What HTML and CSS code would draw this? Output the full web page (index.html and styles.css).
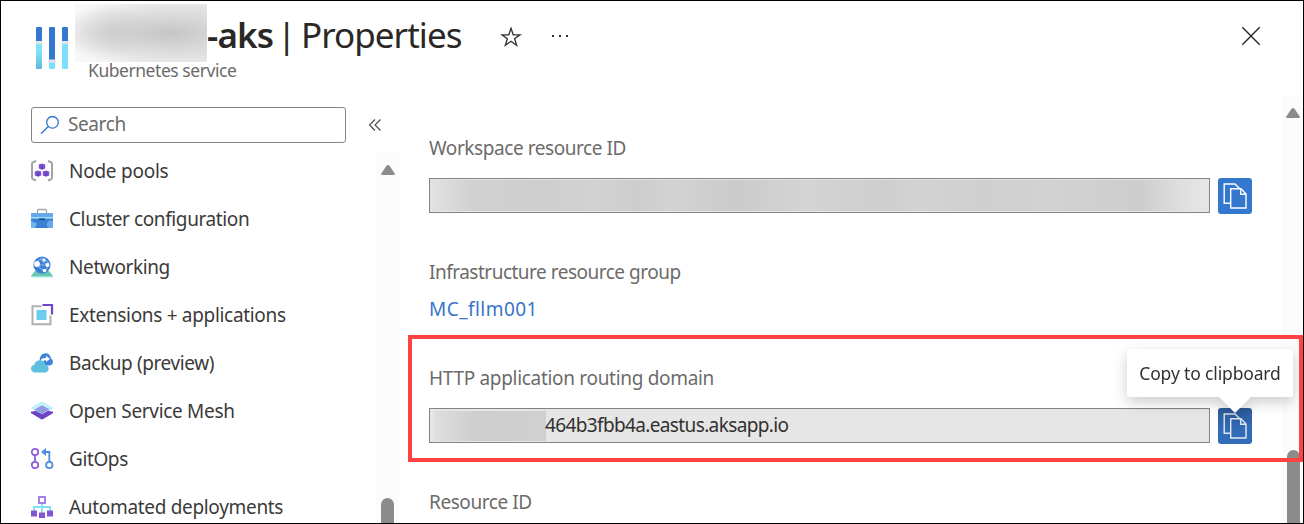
FILE: index.html
```html
<!DOCTYPE html>
<html lang="en">
<head>
<meta charset="utf-8">
<title>Properties</title>
<link rel="stylesheet" href="styles.css">
</head>
<body>
<div class="blade">
  <header class="header">
    <svg class="service-icon" width="34" height="44" viewBox="0 0 34 44">
      <defs><linearGradient id="aqua" x1="0" y1="0" x2="0" y2="1"><stop offset="0.3" stop-color="#7fe3fb"/><stop offset="1" stop-color="#64b8db"/></linearGradient></defs>
      <g fill="#3477cf"><rect x="1" y="1" width="6" height="16" rx="1"/><rect x="14" y="1" width="6" height="34" rx="1"/><rect x="27" y="1" width="6" height="16" rx="1"/></g>
      <rect x="1" y="17" width="6" height="26" rx="1" fill="url(#aqua)"/><rect x="14" y="36" width="6" height="7" rx="1" fill="#7be1fb"/><rect x="27" y="17" width="6" height="26" rx="1" fill="#7be1fb"/>
      <g fill="#e2e4e7"><rect x="0" y="15" width="8" height="3" rx="1"/><rect x="13" y="33.500" width="8" height="3" rx="1"/><rect x="26" y="15" width="8" height="3" rx="1"/></g>
    </svg>
    <div class="titles">
      <div class="title-row">
        <span class="redact redact-title"></span>
        <h1 class="title"><b class="name">-aks</b><span class="bar">|</span><span class="page">Properties</span></h1>
        <svg class="star" width="22" height="22" viewBox="0 0 22 22"><path d="M11 2.200 L13.200 8.800 H20 L14.600 12.700 L16.700 19.400 L11 15.300 L5.300 19.400 L7.400 12.700 L2 8.800 H8.800 Z" fill="none" stroke="#323130" stroke-width="1.300"/></svg>
        <svg class="more" width="18" height="4" viewBox="0 0 18 4"><g fill="#323130"><rect x="1" y="1" width="2" height="2"/><rect x="8" y="1" width="2" height="2"/><rect x="15" y="1" width="2" height="2"/></g></svg>
      </div>
      <div class="subtitle">Kubernetes service</div>
    </div>
    <svg class="close" width="20" height="20" viewBox="0 0 20 20"><path d="M1.300 1.300 L18.700 18.700 M18.700 1.300 L1.300 18.700" stroke="#292827" stroke-width="1.400"/></svg>
  </header>
  <div class="body">
    <nav class="sidebar">
      <div class="search-row">
        <div class="search">
          <svg width="20" height="20" viewBox="0 0 20 20"><circle cx="12.500" cy="7.300" r="5.800" fill="none" stroke="#3477cf" stroke-width="1.300"/><path d="M8.300 11.400 L1 18.700" stroke="#3477cf" stroke-width="1.400"/></svg>
          <span class="placeholder">Search</span>
        </div>
        <svg class="collapse" width="14" height="14" viewBox="0 0 14 14"><path d="M7 1.500 L1.500 7 L7 12.500 M12.500 1.500 L7 7 L12.500 12.500" fill="none" stroke="#484644" stroke-width="1.100"/></svg>
      </div>
      <div class="menu-area">
        <ul class="menu">
          <li class="item"><svg width="24" height="24" viewBox="0 0 24 24"><g fill="none" stroke="#a3a3a3" stroke-width="2"><path d="M6 2 L3.500 3 Q2 3.500 2 5 V18.500 Q2 20 3.500 20.500 L6 21.500"/><path d="M18 2 L20.500 3 Q22 3.500 22 5 V18.500 Q22 20 20.500 20.500 L18 21.500"/></g><g fill="#7a50d2"><path d="M12 4.500 L15.200 5.500 V9.500 L12 10.700 L8.800 9.500 V5.500Z"/><path d="M8 11.500 L11.200 12.500 V16.500 L8 17.700 L4.800 16.500 V12.500Z"/><path d="M16 11.500 L19.200 12.500 V16.500 L16 17.700 L12.800 16.500 V12.500Z"/></g><g stroke="#5d2db4" fill="none"><path d="M12 6.800 V10 M8 13.800 V17 M16 13.800 V17"/></g></svg><span class="item-text snug">Node pools</span></li>
          <li class="item"><svg width="24" height="24" viewBox="0 0 24 24"><path d="M7.500 6 V3.500 Q7.500 2.500 8.500 2.500 H15.500 Q16.500 2.500 16.500 3.500 V6" fill="none" stroke="#a4a6a9" stroke-width="1.300"/><rect x="1" y="6" width="22" height="15" rx=".6" fill="#3a80d3"/><rect x="1" y="6" width="22" height="4" fill="#68a8e9"/><rect x="1" y="10" width="22" height="1.600" fill="#96e3fb"/><rect x="9" y="11.300" width="6" height="2" fill="#1f579b"/><path d="M1 14 L7 16.500 L5 21 H1Z" fill="#72b2ee"/><path d="M23 14 A4 4 0 0 0 19 21 H23Z" fill="#69a7e8"/></svg><span class="item-text tight">Cluster configuration</span></li>
          <li class="item"><svg width="24" height="24" viewBox="0 0 24 24"><path d="M5 16 Q12 12 19 16 L23 21 V22 H1 V21Z" fill="#64c7b5"/><rect x="1" y="21" width="22" height="1.400" fill="#98e4d7"/><circle cx="12" cy="10" r="8.600" fill="#3c7ed5"/><g fill="none" stroke="#9fccf5" stroke-width=".8"><path d="M5 8 L12 3 L19 8 L15 17 L6.500 10 L17 10 L10 4"/></g><g fill="#fff"><circle cx="7" cy="9" r="2.900"/><circle cx="14" cy="5" r="1.600"/><circle cx="17.500" cy="10" r="2"/><circle cx="14.500" cy="15.500" r="1.800"/></g></svg><span class="item-text tight">Networking</span></li>
          <li class="item"><svg width="24" height="24" viewBox="0 0 24 24"><path d="M11.500 3.300 H2.500 V21.300 H20.500 V12.500" fill="none" stroke="#b1b1b1" stroke-width="2"/><path d="M12.500 2 H22 V11.500" fill="none" stroke="#7045cb" stroke-width="2.200"/><rect x="6.500" y="7" width="10" height="10" fill="#6bcdef"/></svg><span class="item-text">Extensions + applications</span></li>
          <li class="item"><svg width="24" height="24" viewBox="0 0 24 24"><path d="M12 14.500 Q9 14 9.500 10.500 Q9.500 3 15 2.300 Q20 2.200 21 7.500 Q23.300 8.500 23 11 Q22.500 14.500 19 14.500Z" fill="#3f83db"/><path d="M10 11 Q11 6.500 16 7 V4.800 L20 8 L16 11 V9 Q13.500 9 12 11.500Z" fill="#fff"/><path d="M5 21.500 Q1 21 1 17.500 Q1.200 14.500 4.200 13.700 Q5.500 9.300 10 9.300 Q14.700 9.500 15.500 14 Q18.700 14.500 18.700 17.800 Q18.400 21.200 15 21.500Z" fill="#5fbfdf"/></svg><span class="item-text tight">Backup (preview)</span></li>
          <li class="item"><svg width="24" height="24" viewBox="0 0 24 24"><path d="M1 14 L12 7.500 L23 14 L12 20.500Z" fill="#794dcc"/><path d="M1 12.500 V14 L12 20.500 L23 14 V12.500Z" fill="#6f43c4"/><path d="M1.500 9 L12 3 L22.500 9 L12 14.800Z" fill="#c9f3fd" stroke="#8de8fc" stroke-dasharray="2 1"/><path d="M4.500 10.300 L12 6.200 L19.500 10.300 L12 14.500Z" fill="#9298e3"/></svg><span class="item-text">Open Service Mesh</span></li>
          <li class="item"><svg width="24" height="24" viewBox="0 0 24 24"><g fill="none" stroke-width="1.800"><g stroke="#8d5ddd"><circle cx="5" cy="5" r="3.200"/><circle cx="5" cy="18" r="3.200"/><path d="M5 8.200 V14.800"/></g><g stroke="#4b8edf"><circle cx="19.300" cy="18" r="3.200"/><path d="M19.300 14.800 V5 H14"/></g></g><path d="M11 5 L16 1 V9Z" fill="#4b8edf"/></svg><span class="item-text tight">GitOps</span></li>
          <li class="item"><svg width="24" height="24" viewBox="0 0 24 24"><path d="M12 8 V18 M4 16 V12 H20 V16" fill="none" stroke="#82dff5" stroke-width="1.800"/><rect x="9" y="2" width="6" height="6" fill="#fff" stroke="#9470e0" stroke-width="1.700"/><g fill="#8157d3"><rect x="1" y="15.500" width="6" height="6"/><rect x="9" y="17.500" width="6" height="5.500"/><rect x="17" y="15.500" width="6" height="6"/></g></svg><span class="item-text">Automated deployments</span></li>
        </ul>
        <div class="track track-menu">
          <svg class="arrow" width="14" height="10" viewBox="0 0 14 10"><path d="M5.500 .8 Q7 -.6 8.500 .8 L13.700 8.500 Q14.200 10 13 10 H1 Q-.2 10 .3 8.500Z" fill="#8b8b8b"/></svg>
          <div class="thumb"></div>
        </div>
      </div>
    </nav>
    <main class="main">
      <div class="fields">
        <section class="field">
          <div class="label">Workspace resource ID</div>
          <div class="value-row">
            <div class="value"><span class="redact redact-id"></span></div>
            <button class="copy" aria-label="Copy"><svg width="24" height="26" viewBox="0 0 24 26"><g fill="none" stroke="#fff" stroke-width="1.400"><path d="M7 20.300 H1.200 V1 H12 L17 6"/><path d="M7.700 5.700 H18 L23 11 V25 H7.700Z"/><path d="M17.700 6 V11.200 H23"/></g></svg></button>
          </div>
        </section>
        <section class="field field-link">
          <div class="label label-group">Infrastructure resource group</div>
          <a class="link">MC_fllm001</a>
        </section>
        <section class="field">
          <div class="label label-domain">HTTP application routing domain</div>
          <div class="value-row">
            <div class="value"><span class="redact redact-domain"></span><span class="domain">464b3fbb4a.eastus.aksapp.io</span></div>
            <button class="copy hovered" aria-label="Copy"><svg width="24" height="26" viewBox="0 0 24 26"><g fill="none" stroke="#e4ebf4" stroke-width="1.400"><path d="M7 20.300 H1.200 V1 H12 L17 6"/><path d="M7.700 5.700 H18 L23 11 V25 H7.700Z"/><path d="M17.700 6 V11.200 H23"/></g></svg></button>
            <div class="tooltip"><span class="tip-text">Copy to clipboard</span></div>
          </div>
        </section>
        <section class="field"><div class="label">Resource ID</div></section>
      </div>
      <div class="track track-main">
        <svg class="arrow" width="14" height="10" viewBox="0 0 14 10"><path d="M5.500 .8 Q7 -.6 8.500 .8 L13.700 8.500 Q14.200 10 13 10 H1 Q-.2 10 .3 8.500Z" fill="#8b8b8b"/></svg>
        <div class="thumb"></div>
      </div>
    </main>
  </div>
  <div class="highlight"></div>
</div>
</body>
</html>
```
FILE: styles.css
```css
* { box-sizing: border-box; }
body { margin: 0; font-family: "Noto Sans", "Open Sans", sans-serif; font-size: 19px; color: #3b3a39; background: #fff; }
svg { display: block; flex: none; }
.blade { position: relative; width: 1304px; height: 524px; border: 1px solid #000; overflow: hidden; display: flex; flex-direction: column; background: #fff; }
.header { height: 95px; flex: none; display: flex; align-items: flex-start; padding: 3px 42px 0 34px; }
.service-icon { margin: 22px 6px 0 0; }
.titles { flex: 1; }
.title-row { display: flex; align-items: center; height: 58px; }
.title { display: flex; margin: 4px 0 0; font-size: 35px; line-height: 50px; font-weight: 400; color: #292827; white-space: nowrap; }
.name { width: 70px; font-weight: 600; letter-spacing: -0.8px; }
.bar { width: 24px; }
.page { width: 199px; letter-spacing: -0.95px; }
.star { margin-top: 7px; }
.more { margin: 6px 0 0 29px; }
.subtitle { margin: -4px 0 0 13px; font-size: 17.5px; line-height: 24px; letter-spacing: -0.45px; color: #6c6b6a; }
.close { margin-top: 22px; }
.redact { display: block; flex: none; }
.redact-title { width: 132px; height: 58px; background: radial-gradient(ellipse 50px 26px at 35px 28px, rgba(190,190,190,.5), transparent), radial-gradient(ellipse 110px 38px at 95px 29px, #c5c5c5, rgba(208,208,208,.7) 45%, transparent), linear-gradient(90deg, #f8f8f8, #ededed); }
.body { flex: 1; min-height: 0; display: grid; grid-template-columns: 398px 1fr; }
.sidebar { display: flex; flex-direction: column; min-height: 0; padding: 11px 0 0 30px; }
.search-row { display: flex; align-items: center; height: 36px; flex: none; }
.search { display: flex; align-items: center; width: 315px; height: 36px; padding-left: 8px; border: 1px solid #868583; border-radius: 3px; }
.placeholder { margin: 0 0 2px 8px; color: #6c6b6a; line-height: 28px; letter-spacing: -0.4px; }
.collapse { margin-left: 22px; }
.menu-area { display: flex; flex: 1; min-height: 0; margin-top: 4px; }
.menu { width: 345px; margin: 0; padding: 0; list-style: none; }
.item { display: flex; align-items: center; gap: 15px; height: 48px; white-space: nowrap; }
.item svg { margin-left: -1px; }
.item-text { letter-spacing: -0.32px; }
.item-text.tight { letter-spacing: -0.39px; }
.item-text.snug { letter-spacing: -0.25px; }
.track { background: #fcfcfc; display: flex; flex-direction: column; align-items: center; justify-content: space-between; }
.track-menu { width: 23px; margin-top: 6px; padding-top: 12px; }
.thumb { width: 13px; border-radius: 7px 7px 0 0; background: #8b8b8b; }
.track-menu .thumb { height: 25px; }
.main { display: flex; justify-content: space-between; min-height: 0; padding-left: 30px; }
.fields { width: 824px; padding-top: 39px; }
.field { margin-bottom: 44px; }
.field-link { margin-bottom: 42px; }
.label { line-height: 27px; letter-spacing: -0.43px; color: #6c6b6a; white-space: nowrap; }
.label-group { letter-spacing: -0.5px; }
.label-domain { letter-spacing: -0.31px; }
.link { display: block; margin-top: 10px; line-height: 27px; letter-spacing: 0.45px; color: #3874cb; }
.value-row { position: relative; display: flex; margin-top: 16px; margin-bottom: 45px; height: 36px; }
.value { display: flex; align-items: center; width: 781px; height: 35px; border: 1px solid #858483; background: #e6e6e6; color: #323130; }
.redact-id { width: 779px; height: 31px; background: linear-gradient(90deg, #e3e3e3 0, #dcdcdc 14px, #d1d1d1 42px, #cecece 110px, #d2d2d2 165px, #cdcdcd 210px, #d3d3d3 240px, #cbcbcb 305px, #d4d4d4 375px, #cecece 455px, #d3d3d3 490px, #cfcfcf 550px, #d2d2d2 620px, #cdcdcd 710px, #e0e0e0 755px, #e6e6e6 779px); }
.redact-domain { width: 112px; height: 30px; margin-left: 4px; background: linear-gradient(90deg, #dfdfdf 0, #d8d8d8 16px, #cecece 42px, #cfcfcf 78px, #d0d0d0 112px); }
.domain { margin: 0 0 2px -1px; letter-spacing: -0.63px; white-space: nowrap; }
.copy { display: flex; align-items: center; justify-content: center; width: 34px; height: 36px; margin-left: 8px; padding: 0 1px 1px 0; border: 0; border-radius: 3px; background: #3477cf; }
.hovered { background: linear-gradient(#2d5d9d, #326bb8 60%); }
.tooltip { position: absolute; left: 698px; top: -59px; width: 166px; height: 48px; display: flex; align-items: center; justify-content: center; background: #fff; border-radius: 3px; font-size: 17.5px; letter-spacing: -0.15px; color: #323130; white-space: nowrap; z-index: 2; filter: drop-shadow(0 5px 7px rgba(0,0,0,.2)); }
.tooltip::after { content: ""; position: absolute; left: 91px; top: 47px; border: 17px solid transparent; border-bottom: 0; border-top-color: #fff; }
.track-main { width: 21px; padding: 12px 1px 0 2px; }
.track-main .thumb { height: 73px; }
.highlight { position: absolute; left: 407px; top: 334px; width: 895px; height: 127px; border: 4px solid #ff4343; z-index: 3; }
```
